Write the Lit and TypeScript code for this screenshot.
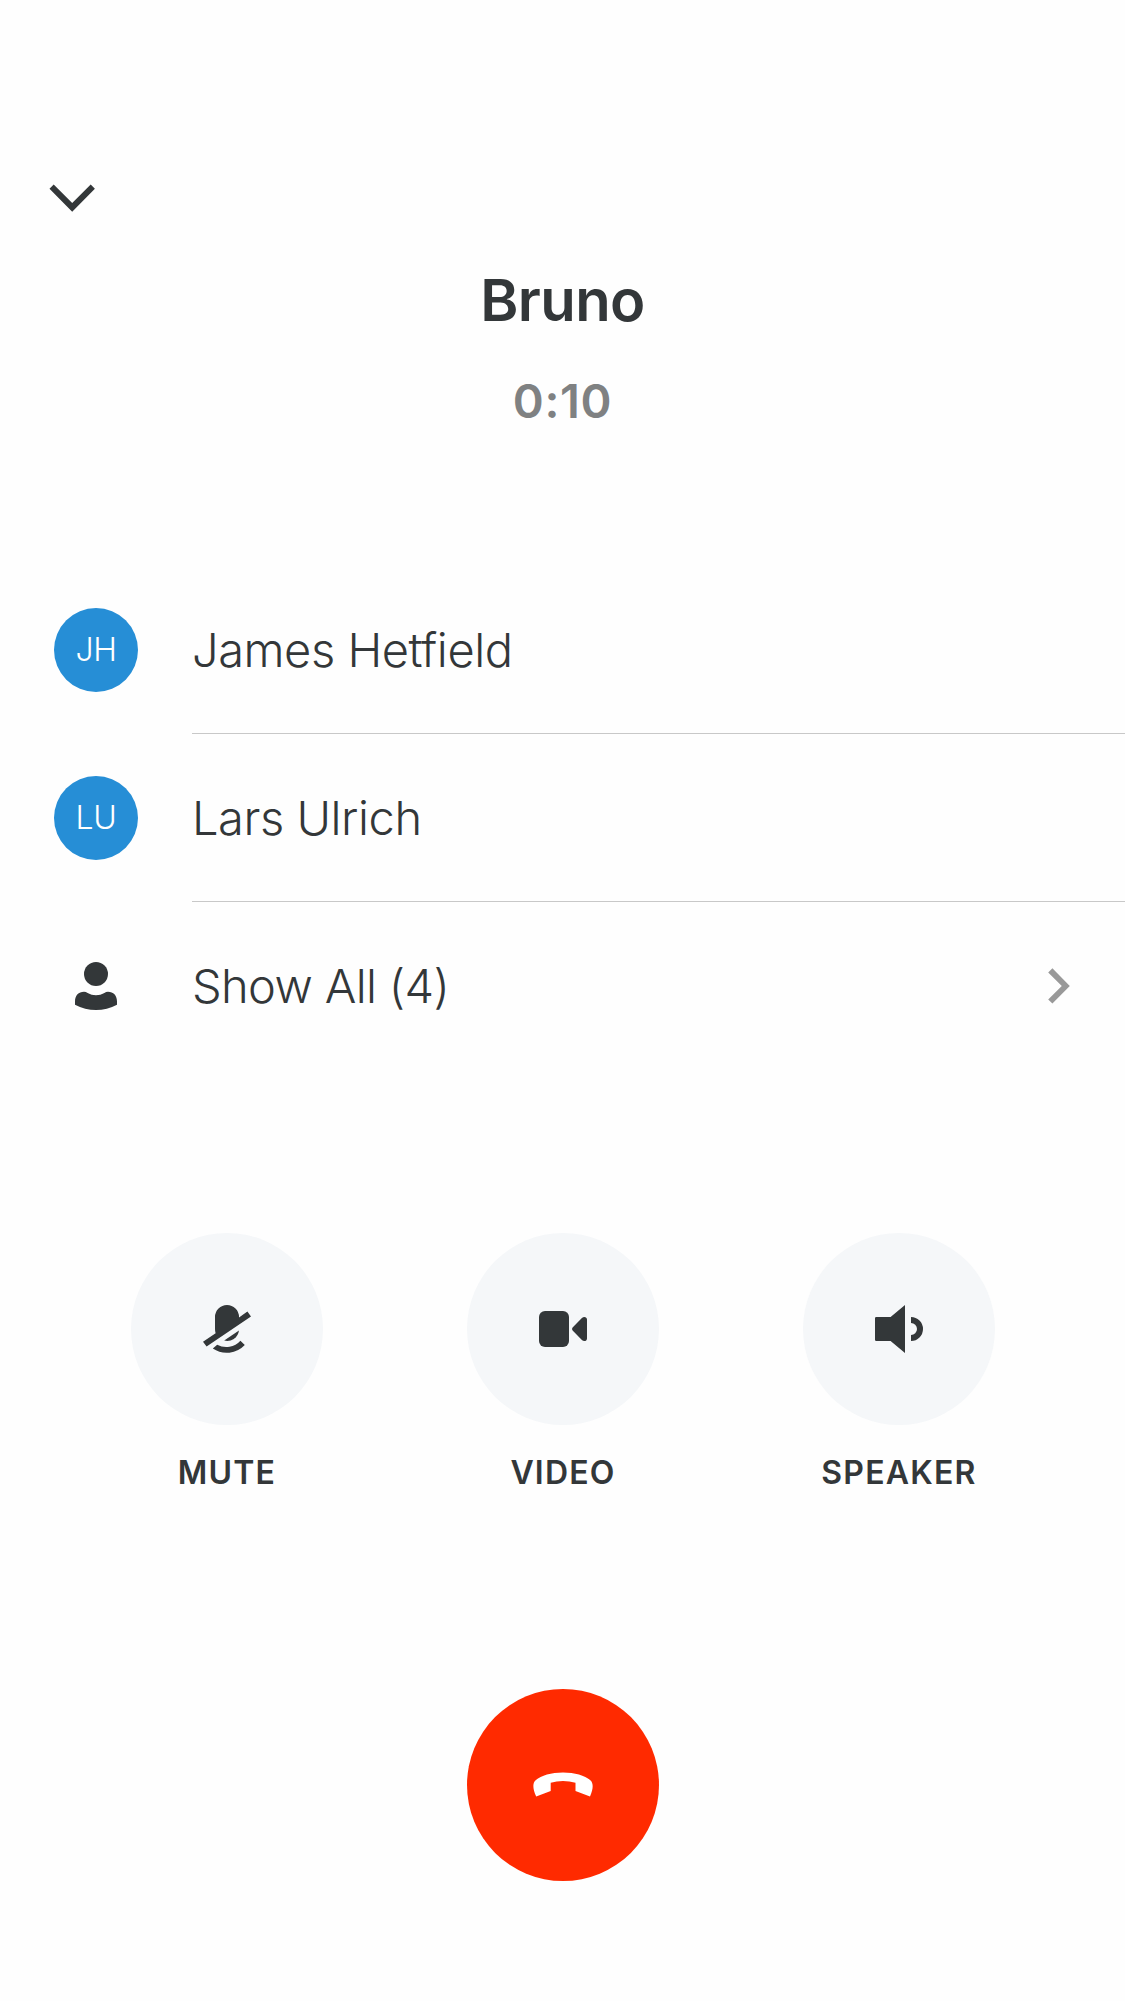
import { LitElement, html, css, svg, TemplateResult } from "lit";
import { customElement, property } from "lit/decorators.js";

const ICONS: Record<string, TemplateResult> = {
  mute: svg`<path d="M24 0a12 12 0 0 1 12 12v.6L44.4 6.6 48 11.6 3.6 41.5 0 36.8 12.6 28.2Q12 26 12 24V12A12 12 0 0 1 24 0z"/>
    <path d="M36 25.6A12 12 0 0 1 21.2 35.6z"/>
    <path d="M37.4 35.7 41.8 40A25 25 0 0 1 9.8 43.6L14.2 39.8A19 19 0 0 0 37.4 35.7z"/>`,
  video: svg`<rect x="0" y="6" width="30" height="36" rx="6"/>
    <path d="M33.6 22.4 42.9 13.1C44.8 11.2 48 12 48 14.6V33.4C48 36 44.8 36.8 42.9 34.9L33.6 25.6Q32.4 24 33.6 22.4z"/>`,
  speaker: svg`<path d="M1.2 12H15.6L30 0V48L15.6 36H1.2Q0 36 0 34.8V13.2Q0 12 1.2 12z"/>
    <path d="M36 12a12 12 0 0 1 0 24v-6a6 6 0 0 0 0-12z"/>`,
};

@customElement("call-action")
export class CallAction extends LitElement {
  @property() icon = "mute";
  @property() label = "";

  static styles = css`
    :host {
      display: flex;
      flex-direction: column;
      align-items: center;
      width: 192px;
    }
    .disc {
      display: flex;
      align-items: center;
      justify-content: center;
      width: 192px;
      height: 192px;
      border: 0;
      padding: 0;
      border-radius: 50%;
      background: #f5f7f9;
    }
    .icon {
      width: 48px;
      height: 48px;
      fill: #333739;
    }
    .label {
      margin-top: 28px;
      font-size: 32px;
      line-height: 39px;
      font-weight: 560;
      letter-spacing: 1.2px;
      white-space: nowrap;
    }
  `;

  render() {
    return html`<button class="disc" aria-label=${this.label}>
        <svg class="icon" viewBox="0 0 48 48">${ICONS[this.icon]}</svg>
      </button>
      <span class="label">${this.label}</span>`;
  }
}

interface Person {
  initials: string;
  name: string;
}

@customElement("app-root")
export class AppRoot extends LitElement {
  static styles = css`
    :host {
      display: block;
    }
    .page {
      box-sizing: border-box;
      display: flex;
      flex-direction: column;
      height: 2001px;
      padding-top: 180px;
      overflow: hidden;
      background: #fefefe;
      color: #333739;
      font-family: Inter, "Liberation Sans", sans-serif;
    }
    .nav {
      display: flex;
      height: 36px;
      padding-left: 48px;
    }
    .down {
      width: 48px;
      height: 36px;
      fill: #333739;
    }
    .header {
      display: flex;
      flex-direction: column;
      align-items: center;
      height: 350px;
      padding-top: 48px;
      box-sizing: border-box;
    }
    .title {
      margin: 0;
      font-size: 58px;
      line-height: 72px;
      font-weight: 600;
      letter-spacing: -0.6px;
    }
    .timer {
      margin-top: 36px;
      font-size: 47px;
      line-height: 58px;
      font-weight: 570;
      letter-spacing: 0.6px;
      color: #7f8182;
    }
    .people {
      display: flex;
      flex-direction: column;
    }
    .row {
      display: grid;
      grid-template-columns: 84px 1fr;
      column-gap: 54px;
      height: 168px;
      padding-left: 54px;
      align-items: center;
    }
    .avatar {
      box-sizing: border-box;
      display: flex;
      align-items: center;
      justify-content: center;
      width: 84px;
      height: 84px;
      padding-bottom: 2px;
      border-radius: 50%;
      background: #268ed6;
      color: #fff;
      font-size: 32px;
      font-weight: 260;
      letter-spacing: -0.4px;
    }
    .person {
      justify-self: center;
      width: 42px;
      height: 48px;
      fill: #333739;
    }
    .cell {
      box-sizing: border-box;
      display: flex;
      align-items: center;
      justify-content: space-between;
      height: 168px;
      padding-right: 54px;
      font-size: 47px;
      font-weight: 300;
      letter-spacing: -0.45px;
      border-bottom: 1px solid transparent;
    }
    .more {
      padding-bottom: 1px;
      letter-spacing: -0.65px;
    }
    .divided {
      border-bottom-color: #c8c8c8;
    }
    .next {
      width: 24px;
      height: 36px;
      margin-top: 2px;
      fill: #999;
    }
    .actions {
      display: flex;
      justify-content: center;
      gap: 144px;
      padding: 163px 0 0 1px;
    }
    .end {
      display: flex;
      justify-content: center;
      padding: 197px 0 0 1px;
    }
    .hangup {
      display: flex;
      align-items: center;
      justify-content: center;
      width: 192px;
      height: 192px;
      padding: 0 0 1px;
      box-sizing: border-box;
      border: 0;
      border-radius: 50%;
      background: #ff2a00;
    }
    .phone {
      width: 60px;
      height: 25px;
      fill: #fff;
    }
  `;

  private people: Person[] = [
    { initials: "JH", name: "James Hetfield" },
    { initials: "LU", name: "Lars Ulrich" },
  ];

  private actions = [
    { icon: "mute", label: "MUTE" },
    { icon: "video", label: "VIDEO" },
    { icon: "speaker", label: "SPEAKER" },
  ];

  render() {
    return html`<main class="page">
      <nav class="nav">
        <svg class="down" viewBox="0 0 48 36">
          <path d="M5.7 4.5 24.2 23 42.7 4.500 46.900 8.800 24.200 31.800 1.500 8.800z" />
        </svg>
      </nav>
      <header class="header">
        <h1 class="title">Bruno</h1>
        <span class="timer">0:10</span>
      </header>
      <section class="people">
        ${this.people.map(
          (p) => html`<div class="row">
            <span class="avatar">${p.initials}</span>
            <div class="cell divided">${p.name}</div>
          </div>`
        )}
        <div class="row">
          <svg class="person" viewBox="0 0 42 48">
            <circle cx="21" cy="12" r="12" />
            <path
              d="M0 42.7V39.5C0 33.5 3.6 29.8 9 29.8Q11 29.8 12.6 31Q16.5 33.2 21 33.2T29.4 31Q31 29.8 33 29.8C38.4 29.8 42 33.5 42 39.5V42.7Q32 48 21 48T0 42.7z"
            />
          </svg>
          <div class="cell more">
            Show All (4)
            <svg class="next" viewBox="0 0 24 36">
              <path d="M1.2 4.4 5.4.3 22.8 18 5.4 35.5 1.2 31.5 14.8 18z" />
            </svg>
          </div>
        </div>
      </section>
      <section class="actions">
        ${this.actions.map(
          (a) => html`<call-action icon=${a.icon} label=${a.label}></call-action>`
        )}
      </section>
      <footer class="end">
        <button class="hangup" aria-label="End call">
          <svg class="phone" viewBox="0 0 60 25">
            <path
              d="M30 .5C42 .5 52.500 3.700 57.600 8.400C60.300 11 60.600 16.500 57 24.500L42.500 18.900V10.800Q36.500 9 30 9T17.700 10.800V18.900L3.200 24.500C-.6 16.500 -.3 11 2.400 8.400C7.500 3.700 18 .5 30 .5z"
            />
          </svg>
        </button>
      </footer>
    </main>`;
  }
}
